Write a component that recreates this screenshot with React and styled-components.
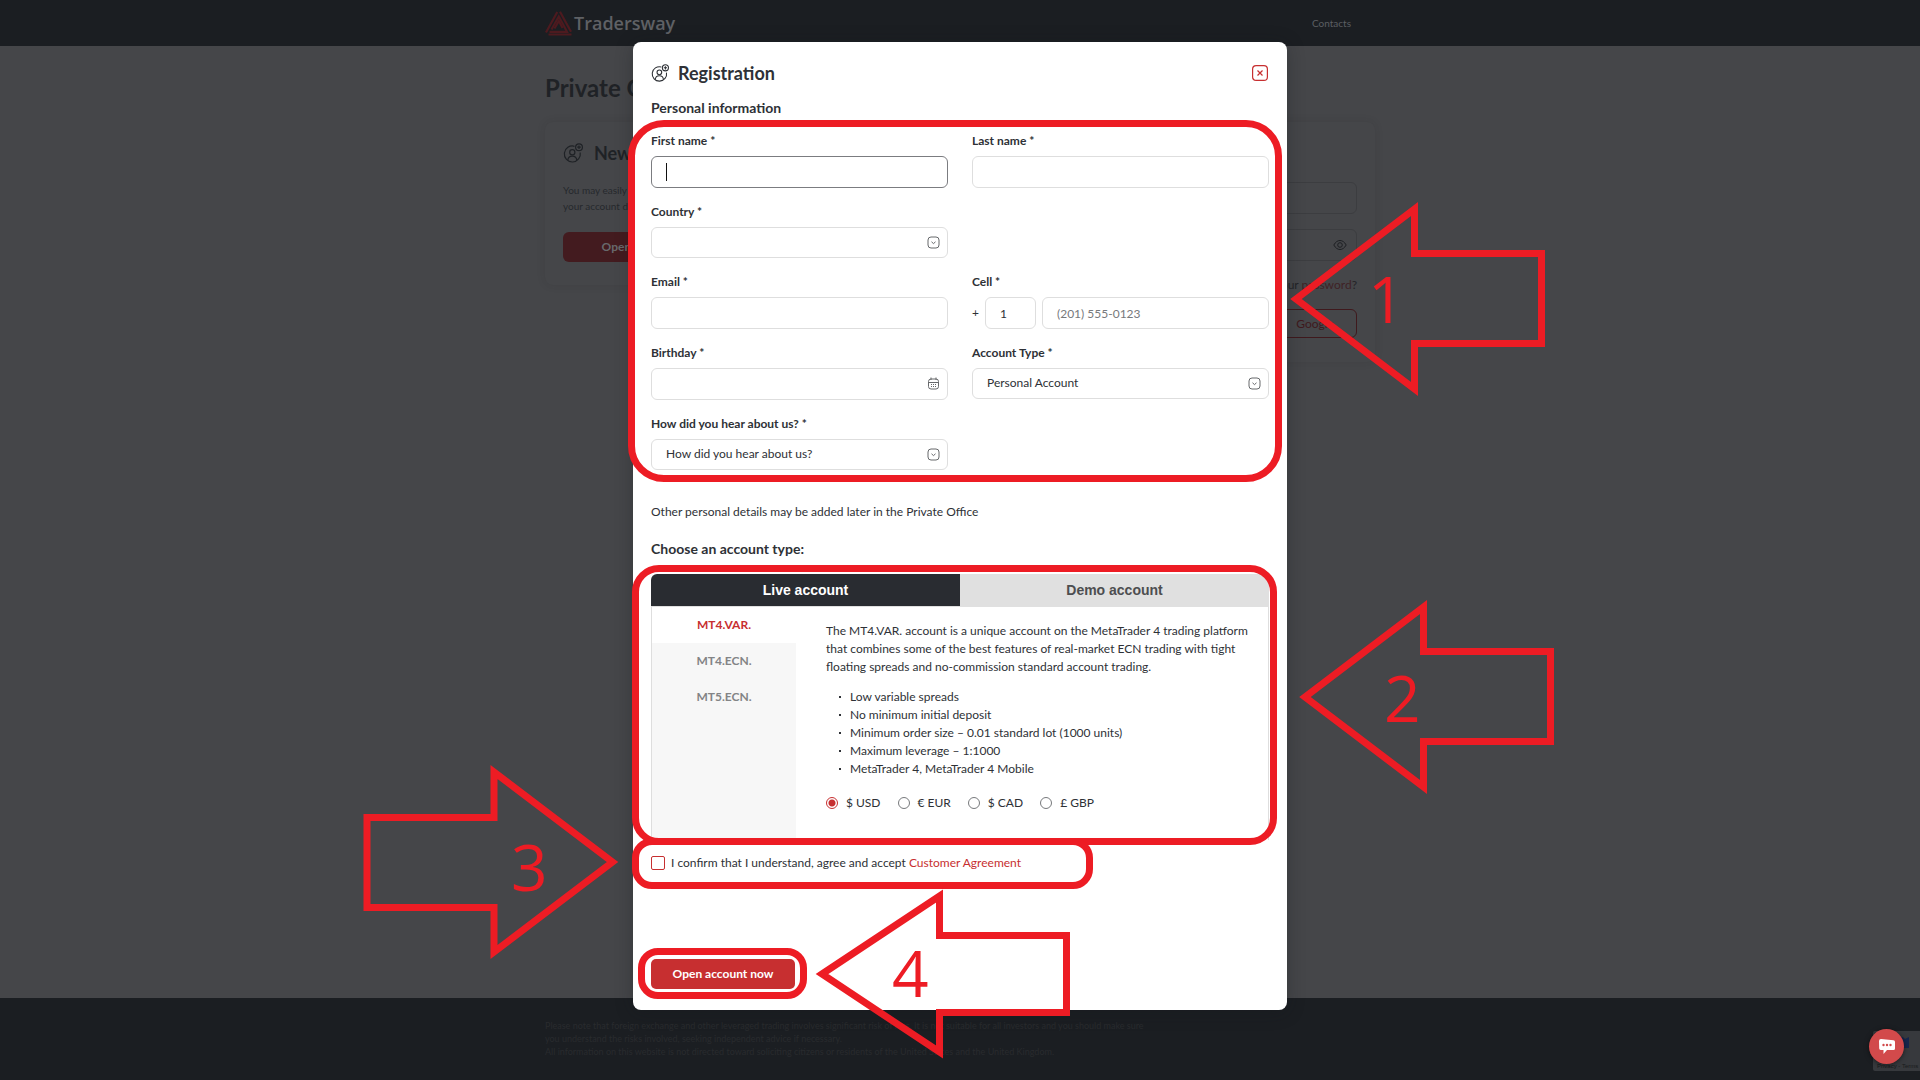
import React, { useState } from "react";
import styled, { createGlobalStyle } from "styled-components";

const RED = "#c72f30";
const MARK = "#ed1c24";
const INK = "#2e3136";

const GlobalStyle = createGlobalStyle`
  * { box-sizing: border-box; }
  body {
    margin: 0;
    background: #454649;
    color: ${INK};
    font-family: Lato, "Liberation Sans", sans-serif;
    font-size: 12px;
    line-height: 18px;
  }
  h1, h2, h3, p, ul { margin: 0; padding: 0; }
  button, input, select { font: inherit; color: inherit; margin: 0; }
  a { text-decoration: none; }
`;

/* ---------- page behind the dialog ---------- */

const Page = styled.div`
  position: relative;
  min-height: 100vh;
  display: flex;
  flex-direction: column;
  overflow: hidden;
`;

const Wrap = styled.div`
  width: 100%;
  max-width: 830px;
  margin: 0 auto;
`;

const TopBar = styled.header`
  background: #1b1e22;
  height: 46px;
  display: flex;
  align-items: center;
`;

const TopRow = styled(Wrap)`
  display: flex;
  align-items: center;
  justify-content: space-between;
`;

const Logo = styled.a`
  display: flex;
  align-items: center;
  gap: 2px;
  color: #5f6165;
  font-family: "Open Sans", sans-serif;
  font-size: 18px;
  font-weight: 600;
  line-height: 26px;
`;

const TopLink = styled.a`
  color: #5c5e62;
  font-size: 10px;
  margin-right: 24px;
`;

const Main = styled(Wrap).attrs({ as: "main" })`
  flex: 1;
`;

const PageTitle = styled.h1`
  margin: 26px 0 18px;
  font-size: 24px;
  line-height: 32px;
  font-weight: 700;
  color: #1f2226;
`;

const Cards = styled.div`
  display: flex;
  justify-content: space-between;
  align-items: flex-start;
`;

const Card = styled.section`
  width: 404px;
  padding: 18px;
  border-radius: 8px;
  background: #454649;
  box-shadow: 0 0 8px rgba(30, 32, 36, 0.12);
`;

const CardHead = styled.h2`
  display: flex;
  align-items: center;
  gap: 11px;
  color: #1f2226;
  font-size: 18px;
  line-height: 26px;
`;

const CardText = styled.p`
  margin: 16px 0 18px;
  color: #26292d;
  font-size: 10px;
  line-height: 16px;
`;

const DimButton = styled.button`
  display: block;
  width: 178px;
  height: 30px;
  margin-bottom: 5px;
  border: 0;
  border-radius: 6px;
  background: #431b1f;
  color: #68696c;
  font-weight: 700;
`;

const LoginCard = styled(Card)`
  display: flex;
  flex-direction: column;
  align-items: flex-end;
  padding-top: 60px;
  padding-bottom: 24px;
`;

const DimField = styled.label`
  width: 100%;
  display: flex;
  align-items: center;
  height: 32px;
  margin-bottom: 15px;
  padding-right: 9px;
  border: 1px solid #3c3d40;
  border-radius: 6px;
  color: #1d1f23;
`;

const DimInput = styled.input`
  flex: 1;
  border: 0;
  background: transparent;
  outline: 0;
`;

const ForgotLink = styled.a`
  color: #232327;
  font-size: 12px;
  line-height: 18px;
  margin-bottom: 15px;
  span { color: #3f2226; }
`;

const GoogleButton = styled.button`
  width: 146px;
  height: 29px;
  padding: 0 22px 0 0;
  border: 1px solid #3f191d;
  border-radius: 6px;
  background: transparent;
  color: #3f191d;
  font-size: 12px;
  text-align: right;
`;

const Footer = styled.footer`
  background: #1b1e22;
  height: 82px;
  padding-top: 21px;
  color: #292b2e;
  font-size: 9px;
  line-height: 13px;
`;

const FooterText = styled.p`
  max-width: 600px;
`;

/* ---------- dialog ---------- */

const Layer = styled.div`
  position: absolute;
  inset: 0;
  display: flex;
  justify-content: center;
  align-items: flex-start;
  padding-top: 42px;
`;

const Dialog = styled.form`
  position: relative;
  width: 654px;
  padding: 18px 18px 21px;
  border-radius: 8px;
  background: #fff;
  box-shadow: 0 2px 18px rgba(20, 22, 26, 0.3);
`;

const DialogHead = styled.div`
  display: flex;
  align-items: center;
  justify-content: space-between;
  height: 26px;
`;

const DialogTitle = styled.h2`
  display: flex;
  align-items: center;
  gap: 9px;
  font-size: 18px;
  line-height: 26px;
  font-weight: 700;
`;

const CloseButton = styled.button`
  display: flex;
  padding: 0;
  border: 0;
  background: transparent;
  color: ${RED};
`;

const SubTitle = styled.h3`
  margin: ${(p) => p.$gap};
  font-size: 14px;
  line-height: 20px;
  font-weight: 700;
`;

const Fields = styled.div`
  display: grid;
  grid-template-columns: 1fr 1fr;
  align-items: start;
  gap: 14px 24px;
`;

const Field = styled.div`
  grid-column: ${(p) => (p.$alone ? "1 / 2" : "auto")};
  display: flex;
  flex-direction: column;
  gap: 5px;
`;

const Label = styled.label`
  line-height: 20px;
  font-weight: 700;
`;

const Control = styled.div`
  position: relative;
  display: flex;
  align-items: center;
  gap: 6px;
`;

const Input = styled.input`
  flex: ${(p) => (p.$narrow ? "0 0 51px" : "1")};
  min-width: 0;
  height: 32px;
  padding: 0 14px;
  border: 1px solid #dedede;
  border-radius: 6px;
  background: #fff;
  outline: 0;
  caret-color: transparent;
  &:focus { border-color: #7b7c80; }
  &::placeholder { color: #77797c; opacity: 1; }
`;

const Select = styled.select`
  flex: 1;
  height: 31px;
  padding: 0 14px 2px;
  border: 1px solid #dedede;
  border-radius: 6px;
  background: #fff;
  appearance: none;
  outline: 0;
`;

const FieldIcon = styled.span`
  position: absolute;
  right: 8px;
  top: 9px;
  display: flex;
  color: #66686b;
  pointer-events: none;
`;

const Caret = styled.span`
  position: absolute;
  left: 15px;
  top: 7px;
  width: 1px;
  height: 18px;
  background: #111;
`;

const Note = styled.p`
  margin-top: 32px;
  line-height: 20px;
`;

const Tabs = styled.div`
  display: grid;
  grid-template-columns: 1fr 1fr;
  border-bottom: 1px solid #e0e0e0;
  border-radius: 6px 6px 0 0;
  overflow: hidden;
`;

const Tab = styled.button`
  height: 32px;
  border: 0;
  background: ${(p) => (p.$on ? "#292c31" : "#e0e0e0")};
  color: ${(p) => (p.$on ? "#fff" : "#4d4e50")};
  font: bold 14px "Liberation Sans", Arial, sans-serif;
`;

const Panel = styled.div`
  display: flex;
  min-height: 233px;
  border: 1px solid #dedede;
  border-top: 0;
  border-bottom: 0;
`;

const Platforms = styled.div`
  flex: 0 0 144px;
  display: flex;
  flex-direction: column;
  background: #f7f7f7;
`;

const Platform = styled.button`
  height: 36px;
  border: 0;
  background: ${(p) => (p.$on ? "#fff" : "transparent")};
  color: ${(p) => (p.$on ? RED : "#838486")};
  font-weight: 700;
`;

const Details = styled.div`
  flex: 1;
  padding: 15px 10px 0 30px;
`;

const Features = styled.ul`
  margin: 12px 0 16px;
  padding-left: 13px;
  list-style: none;
`;

const Feature = styled.li`
  display: flex;
  align-items: center;
  gap: 9px;
  &::before {
    content: "";
    width: 2px;
    height: 2px;
    background: ${INK};
  }
`;

const Currencies = styled.div`
  display: flex;
  gap: 17px;
`;

const Currency = styled.label`
  display: flex;
  align-items: center;
  gap: 8px;
`;

const Radio = styled.input`
  appearance: none;
  width: 12px;
  height: 12px;
  border: 1px solid #77797c;
  border-radius: 50%;
  &:checked {
    border-color: ${RED};
    background: radial-gradient(circle, ${RED} 3px, #fff 4px);
  }
`;

const Confirm = styled.div`
  display: flex;
  align-items: center;
  gap: 6px;
  margin: 13px 0 86px;
  line-height: 20px;
  a { color: ${RED}; }
`;

const Checkbox = styled.input`
  appearance: none;
  width: 14px;
  height: 14px;
  border: 1px solid ${RED};
  border-radius: 2px;
  &:checked { background: ${RED}; }
`;

const SubmitButton = styled.button`
  display: block;
  width: 144px;
  height: 30px;
  padding: 0;
  border: 0;
  border-radius: 5px;
  background: ${RED};
  color: #fff;
  font-weight: 700;
`;

/* ---------- tutorial marks over the dialog ---------- */

const Highlight = styled.div`
  position: absolute;
  left: ${(p) => p.$x}px;
  top: ${(p) => p.$y}px;
  width: ${(p) => p.$w}px;
  height: ${(p) => p.$h}px;
  border: 7px solid ${MARK};
  border-radius: ${(p) => p.$r}px;
  pointer-events: none;
`;

const ArrowBox = styled.svg`
  position: absolute;
  left: ${(p) => p.$x}px;
  top: ${(p) => p.$y}px;
  overflow: visible;
  pointer-events: none;
  polygon { fill: none; stroke: ${MARK}; stroke-width: 7; stroke-miterlimit: 8; }
  text { fill: ${MARK}; font-family: "Open Sans", sans-serif; font-size: 64px; font-weight: 400; }
`;

function Arrow({ x, y, points, digit, tx, ty }) {
  return (
    <ArrowBox width="246" height="180" $x={x} $y={y}>
      <polygon points={points} />
      <text x={tx} y={ty}>{digit}</text>
    </ArrowBox>
  );
}

const LEFT = "0,90 118.5,0 118.5,44.5 245.5,44.5 245.5,134.5 118.5,134.5 118.5,180";
const RIGHT = "245.5,90 127,0 127,45.5 0,45.5 0,135.5 127,135.5 127,180";
const LEFT_FLAT = "0,78 117.5,0 117.5,39.5 244.5,39.5 244.5,116.5 117.5,116.5 117.5,156";

/* ---------- icons ---------- */

const UserPlus = ({ size }) => (
  <svg width={size} height={size} viewBox="0 0 20 20" fill="none" stroke="currentColor" strokeWidth="1.2">
    <path d="M11.500 3.300A8 8 0 1 0 17.200 9.500" />
    <circle cx="9.300" cy="9.300" r="2.600" />
    <path d="M4.800 17.300c.2-3 2-4.200 4.500-4.200s4.300 1.200 4.500 4.200" />
    <circle cx="16" cy="4.200" r="3.400" />
    <path d="M16 2.400v3.600M14.200 4.200h3.600" />
  </svg>
);

const CloseIcon = () => (
  <svg width="17" height="16" viewBox="0 0 17 16" fill="none" stroke="currentColor" strokeWidth="1.200">
    <rect x="0.600" y="0.600" width="14.800" height="14.800" rx="3.500" />
    <path d="M5.500 5.500l5 5M10.500 5.500l-5 5" />
  </svg>
);

const DownIcon = () => (
  <svg width="13" height="13" viewBox="0 0 13 13" fill="none" stroke="currentColor">
    <rect x="1" y="1" width="11" height="11" rx="3" />
    <path d="M4.500 5.800l2 1.800 2-1.800" />
  </svg>
);

const CalendarIcon = () => (
  <svg width="13" height="13" viewBox="0 0 13 13" fill="none" stroke="currentColor">
    <rect x="1.500" y="2" width="10" height="10" rx="2.500" />
    <path d="M1.500 5.500h10M4 .5v2.500M9 .5v2.500" />
    <path d="M4 7.500h5M4 9.500h5" strokeDasharray="1 1" />
  </svg>
);

const EyeIcon = () => (
  <svg width="14" height="12" viewBox="0 0 14 12" fill="none" stroke="currentColor">
    <path d="M.8 6C2.500 3 4.600 1.500 7 1.500S11.500 3 13.200 6C11.500 9 9.400 10.500 7 10.500S2.500 9 .8 6z" />
    <circle cx="7" cy="6" r="2.300" />
  </svg>
);

const LogoMark = () => (
  <svg width="27" height="25" viewBox="0 0 27 25" fill="none" stroke="#4d1a1f" strokeWidth="2.200">
    <path d="M1 21.500L12.300 1M3.500 23.500h23M15 .8l11 20" />
    <path d="M4.500 20.800h17.500L13.800 5.500 6.500 18.500" />
    <path d="M9.500 17.500l4.300-7.500 3.800 7" />
  </svg>
);

/* ---------- chat launcher and captcha badge ---------- */

const Corner = styled.div`
  position: absolute;
  right: 0;
  bottom: 9px;
  width: 47px;
  height: 40px;
  border-radius: 2px 0 0 2px;
  background: #37393d;
`;

const BadgeText = styled.span`
  position: absolute;
  left: 4px;
  bottom: 1px;
  font-family: "Liberation Sans", sans-serif;
  font-size: 6px;
  line-height: 8px;
  white-space: nowrap;
  color: #17191c;
`;

const BadgeMark = styled.svg`
  position: absolute;
  left: 24px;
  top: 5px;
`;

const ChatButton = styled.button`
  position: absolute;
  left: -4px;
  top: -2px;
  display: flex;
  align-items: center;
  justify-content: center;
  width: 35px;
  height: 35px;
  padding: 0;
  border: 0;
  border-radius: 50%;
  background: #d24a4b;
  box-shadow: 0 1px 5px rgba(0, 0, 0, 0.5);
`;

const PLATFORMS = ["MT4.VAR.", "MT4.ECN.", "MT5.ECN."];
const FEATURES = [
  "Low variable spreads",
  "No minimum initial deposit",
  "Minimum order size – 0.01 standard lot (1000 units)",
  "Maximum leverage – 1:1000",
  "MetaTrader 4, MetaTrader 4 Mobile",
];
const CURRENCIES = ["$ USD", "€ EUR", "$ CAD", "£ GBP"];

function SelectField({ id, label, option, alone }) {
  return (
    <Field $alone={alone}>
      <Label htmlFor={id}>{label} *</Label>
      <Control>
        <Select id={id}>
          <option>{option}</option>
        </Select>
        <FieldIcon><DownIcon /></FieldIcon>
      </Control>
    </Field>
  );
}

export default function App() {
  const [tab, setTab] = useState("Live account");
  const [platform, setPlatform] = useState(PLATFORMS[0]);
  const [currency, setCurrency] = useState(CURRENCIES[0]);

  return (
    <Page>
      <GlobalStyle />
      <TopBar>
        <TopRow>
          <Logo href="#"><LogoMark />Tradersway</Logo>
          <TopLink href="#">Contacts</TopLink>
        </TopRow>
      </TopBar>
      <Main>
        <PageTitle>Private Office</PageTitle>
        <Cards>
          <Card>
            <CardHead><UserPlus size={20} />New</CardHead>
            <CardText>You may easily<br />your account data</CardText>
            <DimButton type="button">Open account now</DimButton>
          </Card>
          <LoginCard>
            <DimField><DimInput aria-label="Login" /></DimField>
            <DimField><DimInput type="password" aria-label="Password" /><EyeIcon /></DimField>
            <ForgotLink href="#">Forgot your <span>password</span>?</ForgotLink>
            <GoogleButton type="button">Google</GoogleButton>
          </LoginCard>
        </Cards>
      </Main>
      <Footer>
        <Wrap>
          <FooterText>
            Please note that foreign exchange and other leveraged trading involves significant risk of loss. It is not
            suitable for all investors and you should make sure you understand the risks involved, seeking independent
            advice if necessary.
          </FooterText>
          <FooterText>
            All information on this website is not directed toward soliciting citizens or residents of the United States
            and the United Kingdom.
          </FooterText>
        </Wrap>
      </Footer>

      <Layer>
        <Dialog onSubmit={(e) => e.preventDefault()}>
          <DialogHead>
            <DialogTitle><UserPlus size={18} />Registration</DialogTitle>
            <CloseButton type="button" aria-label="Close"><CloseIcon /></CloseButton>
          </DialogHead>
          <SubTitle $gap="12px 0 13px">Personal information</SubTitle>
          <Fields>
            <Field>
              <Label htmlFor="first">First name *</Label>
              <Control><Input id="first" autoFocus /><Caret /></Control>
            </Field>
            <Field>
              <Label htmlFor="last">Last name *</Label>
              <Control><Input id="last" /></Control>
            </Field>
            <SelectField id="country" label="Country" option="" alone />
            <Field $alone>
              <Label htmlFor="email">Email *</Label>
              <Control><Input id="email" type="email" /></Control>
            </Field>
            <Field>
              <Label htmlFor="phone">Cell *</Label>
              <Control>
                +
                <Input $narrow aria-label="Country code" defaultValue="1" />
                <Input id="phone" type="tel" placeholder="(201) 555-0123" />
              </Control>
            </Field>
            <Field>
              <Label htmlFor="birthday">Birthday *</Label>
              <Control><Input id="birthday" /><FieldIcon><CalendarIcon /></FieldIcon></Control>
            </Field>
            <SelectField id="type" label="Account Type" option="Personal Account" />
            <SelectField id="source" label="How did you hear about us?" option="How did you hear about us?" alone />
          </Fields>
          <Note>Other personal details may be added later in the Private Office</Note>
          <SubTitle $gap="17px 0 15px">Choose an account type:</SubTitle>
          <Tabs>
            {["Live account", "Demo account"].map((t) => (
              <Tab key={t} type="button" $on={t === tab} onClick={() => setTab(t)}>{t}</Tab>
            ))}
          </Tabs>
          <Panel>
            <Platforms>
              {PLATFORMS.map((p) => (
                <Platform key={p} type="button" $on={p === platform} onClick={() => setPlatform(p)}>{p}</Platform>
              ))}
            </Platforms>
            <Details>
              <p>
                The MT4.VAR. account is a unique account on the MetaTrader 4 trading platform that combines some of the
                best features of real-market ECN trading with tight floating spreads and no-commission standard account
                trading.
              </p>
              <Features>
                {FEATURES.map((f) => <Feature key={f}>{f}</Feature>)}
              </Features>
              <Currencies>
                {CURRENCIES.map((c) => (
                  <Currency key={c}>
                    <Radio type="radio" name="currency" checked={c === currency} onChange={() => setCurrency(c)} />
                    {c}
                  </Currency>
                ))}
              </Currencies>
            </Details>
          </Panel>
          <Confirm>
            <Checkbox type="checkbox" id="agree" />
            <span>
              <label htmlFor="agree">I confirm that I understand, agree and accept</label>{" "}
              <a href="#">Customer Agreement</a>
            </span>
          </Confirm>
          <SubmitButton type="submit">Open account now</SubmitButton>

          <Highlight $x={-5} $y={78} $w={654} $h={362} $r={36} />
          <Highlight $x={-1} $y={523} $w={645} $h={280} $r={27} />
          <Highlight $x={-1} $y={796} $w={461} $h={51} $r={20} />
          <Highlight $x={5} $y={906} $w={169} $h={51} $r={20} />
          <Arrow x={663} y={167} points={LEFT} digit="1" tx={72} ty={114} />
          <Arrow x={672} y={565} points={LEFT} digit="2" tx={79} ty={115} />
          <Arrow x={-266} y={730} points={RIGHT} digit="3" tx={144} ty={119} />
          <Arrow x={189} y={854} points={LEFT_FLAT} digit="4" tx={70} ty={101} />
        </Dialog>
      </Layer>

      <Corner>
        <BadgeMark width="12" height="12" viewBox="0 0 12 12"><path d="M0 2q5-3 8 1l4-2v11H6z" fill="#16264d" /></BadgeMark>
        <BadgeText>Privacy - Terms</BadgeText>
        <ChatButton type="button" aria-label="Chat">
          <svg width="18" height="17" viewBox="0 0 18 17">
            <path d="M3 1l12.500 1.200q1.500.3 1.500 1.800v6.500q0 1.500-1.500 1.500H9l-3.500 4V12H3q-1.500 0-1.800-1.500L1 3q0-2 2-2z" fill="#fff" />
            <g fill="#d24a4b"><circle cx="5.500" cy="7" r="1.200" /><circle cx="9" cy="7" r="1.200" /><circle cx="12.500" cy="7" r="1.200" /></g>
          </svg>
        </ChatButton>
      </Corner>
    </Page>
  );
}
